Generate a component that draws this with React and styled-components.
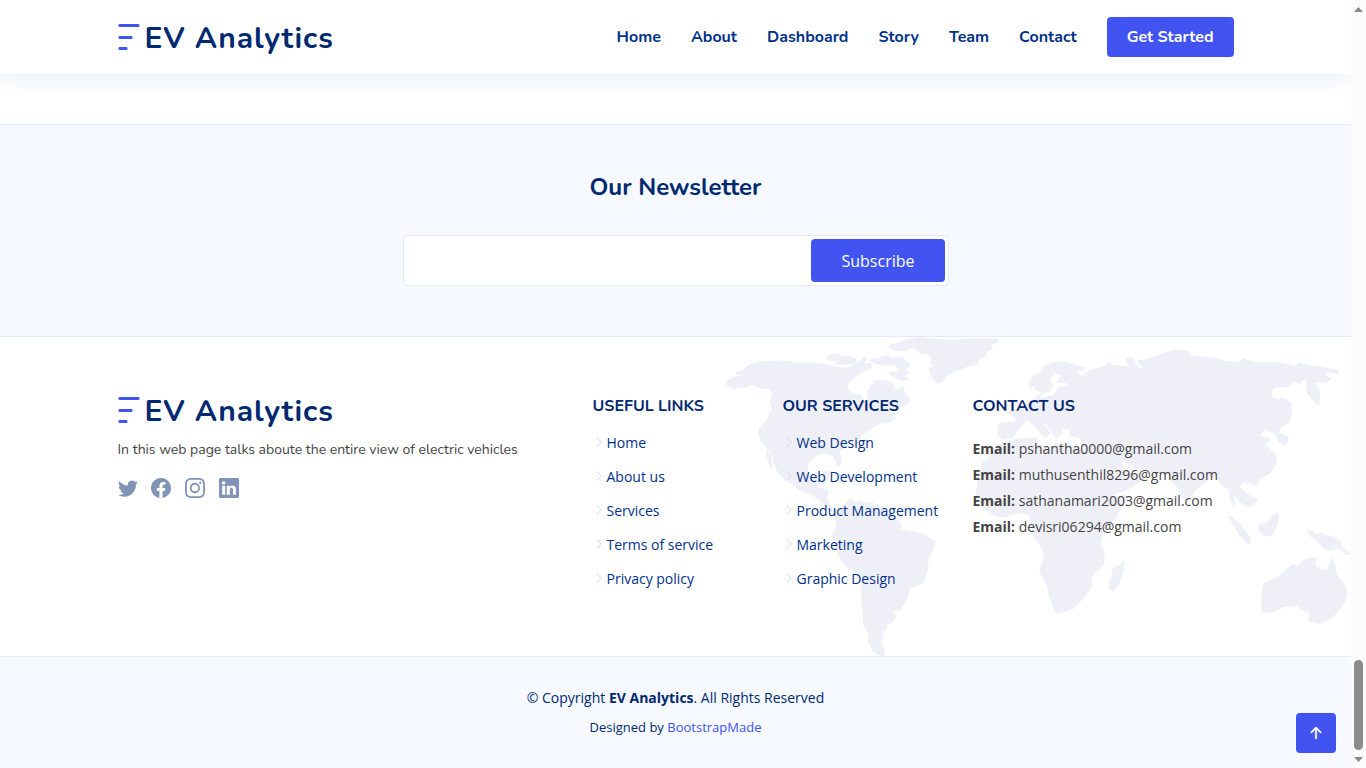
import React from "react";
import styled, { createGlobalStyle } from "styled-components";
import { BsTwitter, BsFacebook, BsInstagram, BsLinkedin, BsChevronRight, BsArrowUpShort } from "react-icons/bs";

const display = `Nunito, Lato, "Open Sans", sans-serif`;
const body = `"Open Sans", "Noto Sans", sans-serif`;

const GlobalStyle = createGlobalStyle`
  * { box-sizing: border-box; }
  body { margin: 0; font-family: ${body}; color: #444444; background: #fff; overflow: hidden; }
  h3, h4, p, ul { margin: 0; padding: 0; font-weight: inherit; }
  ul { list-style: none; }
  a { text-decoration: none; color: inherit; }
`;

const Shell = styled.div`
  display: flex;
  width: 1366px;
  height: 768px;
  overflow: hidden;
`;
const Page = styled.div`
  position: relative;
  width: 1351px;
  overflow: hidden;
`;
const Container = styled.div`
  width: 1140px;
  margin: 0 auto;
  padding: 0 12px;
`;

const Header = styled.header`
  position: relative;
  z-index: 2;
  height: 74px;
  background: #fff;
  box-shadow: 0 2px 20px rgba(1, 41, 112, 0.1);
`;
const HeaderRow = styled(Container)`
  display: flex;
  align-items: center;
  justify-content: space-between;
  height: 74px;
`;
const LogoLink = styled.a`
  display: flex;
  align-items: center;
  gap: 5px;
  height: 36px;
  svg { display: block; flex: none; }
`;
const LogoText = styled.span`
  padding-top: 4px;
  font: 700 30px/36px ${display};
  letter-spacing: 1px;
  color: #012970;
  white-space: nowrap;
`;
const Nav = styled.nav`
  display: flex;
  align-items: center;
  gap: 30px;
`;
const NavLink = styled.a`
  font: 700 16px/22px ${display};
  color: #013289;
  white-space: nowrap;
`;
const StartButton = styled.a`
  height: 40px;
  padding: 0 20px;
  border-radius: 4px;
  background: #4154f1;
  color: #fff;
  font: 700 16px/40px ${display};
  white-space: nowrap;
`;

const Newsletter = styled.section`
  height: 213px;
  margin-top: 50px;
  border-top: 1px solid #e1ecff;
  border-bottom: 1px solid #e1ecff;
  background: #f6f9ff;
  display: flex;
  flex-direction: column;
  align-items: center;
  padding-top: 48px;
`;
const NewsTitle = styled.h4`
  font: 700 24px/29px ${display};
  color: #012970;
`;
const Form = styled.form`
  display: flex;
  width: 546px;
  height: 51px;
  margin-top: 33px;
  padding: 3px;
  border: 1px solid #e1ecff;
  border-radius: 4px;
  background: #fff;
`;
const EmailInput = styled.input`
  flex: 1;
  min-width: 0;
  border: 0;
  outline: 0;
`;
const SubscribeButton = styled.button`
  width: 134px;
  height: 43px;
  padding: 1px 0 0 1px;
  border: 0;
  border-radius: 4px;
  background: #4154f1;
  color: #fff;
  font: 16px/24px ${body};
`;

const FooterTop = styled.section`
  position: relative;
  height: 319px;
  background: #fff;
`;
const WorldMap = styled.svg`
  position: absolute;
  top: 0;
  right: 0;
`;
const Columns = styled(Container)`
  position: relative;
  display: grid;
  grid-template-columns: 475px 190px 190px 261px;
  padding-top: 55px;
`;
const About = styled.p`
  margin-top: 11px;
  font: 400 14px/21px ${display};
  white-space: nowrap;
`;
const Social = styled.div`
  display: flex;
  gap: 13.7px;
  margin-top: 18px;
  color: rgba(1, 41, 112, 0.5);
  svg { display: block; width: 20px; height: 20px; }
`;
const ColumnTitle = styled.h4`
  padding-top: 5px;
  font: 700 16px/19px ${display};
  color: #012970;
  white-space: nowrap;
`;
const LinkList = styled.ul`
  margin-top: 9px;
`;
const LinkItem = styled.li`
  display: flex;
  align-items: center;
  height: 34px;
  font-size: 14px;
  color: #013289;
  white-space: nowrap;
  svg { width: 12px; height: 12px; margin-right: 2px; color: #d0d4fc; }
`;
const Contacts = styled.div`
  margin-top: 20px;
  font-size: 14px;
  line-height: 26px;
  white-space: nowrap;
`;

const FooterBottom = styled.section`
  height: 112px;
  padding-top: 30px;
  border-top: 1px solid #e1ecff;
  background: #f6f9ff;
  text-align: center;
  color: #012970;
`;
const Copyright = styled.p`
  font-size: 14px;
  line-height: 21px;
`;
const Credits = styled.p`
  margin-top: 9px;
  font-size: 13px;
  line-height: 20px;
  a { color: #4154f1; }
`;
const BackToTop = styled.a`
  position: absolute;
  right: 15px;
  bottom: 15px;
  display: flex;
  align-items: center;
  justify-content: center;
  width: 40px;
  height: 40px;
  border-radius: 4px;
  background: #4154f1;
  color: #fff;
  svg { stroke: #fff; stroke-width: 0.3px; }
`;

const Scrollbar = styled.div`
  display: flex;
  flex-direction: column;
  align-items: center;
  justify-content: space-between;
  width: 15px;
  padding: 7px 0 6px;
  background: #fcfcfc;
  svg { display: block; }
`;
const ThumbArea = styled.div`
  flex: 1;
  display: flex;
  align-items: flex-end;
  padding-bottom: 7px;
`;
const Thumb = styled.div`
  width: 9px;
  height: 90px;
  border-radius: 5px;
  background: #8b8b8b;
`;

const land = [
  // North and Central America
  "M22 155L35 143 60 140 75 135 50 133 48 126 72 121 85 106 110 97 160 93 205 94 225 101 270 98 310 103 330 108 375 115 395 110 405 98 425 90 432 82 438 86 432 103 450 98 458 108 446 119 420 130 395 147 381 165 385 182 400 190 425 197 434 217 446 207 440 190 450 175 452 166 465 165 460 157 475 150 500 153 520 162 521 178 530 184 548 170 556 194 572 210 560 225 530 230 505 245 496 258 530 248 524 260 500 265 480 280 450 298 425 315 410 340 380 349 356 364 364 385 362 400 355 408 344 390 342 376 310 370 290 375 264 398 260 430 275 448 296 442 306 427 330 423 322 448 296 462 292 474 323 480 320 510 335 538 350 540 345 550 325 536 310 520 290 502 262 490 235 478 222 465 196 450 175 430 163 400 158 380 148 362 125 336 116 310 118 295 140 270 158 235 151 215 158 190 150 177 110 172 95 163 82 171 55 171 35 180 40 170 22 168Z",
  "M140 362L150 372 158 414 149 408 142 382Z",
  // South America
  "M345 550L360 542 372 525 392 507 400 510 404 526 413 512 430 518 465 521 490 535 520 555 543 580 539 598 575 605 610 613 646 635 640 657 626 678 622 720 610 757 590 768 565 773 566 790 555 815 540 842 512 842 527 857 515 878 497 880 500 894 485 910 490 925 481 938 493 955 491 975 484 978 459 962 444 933 448 914 432 887 428 830 424 780 422 740 400 720 375 705 358 680 347 642 335 620 350 590Z",
  // Greenland
  "M508 47L535 39 562 29 598 22 640 28 700 31 760 26 832 27 835 36 810 44 816 57 795 68 794 79 778 90 768 103 740 110 700 126 680 136 671 151 657 160 641 150 632 132 628 113 644 111 632 98 637 85 622 72 602 69 588 58 600 53 570 55 551 63 520 60Z",
  // Arctic islands
  "M318 82L340 72 360 74 370 80 390 78 408 87 400 101 370 103 346 101 350 91 325 91Z",
  "M457 84L475 88 485 79 504 77 514 85 544 82 568 101 567 112 553 114 568 129 551 138 567 149 541 150 510 134 508 127 532 126 538 113 516 103 487 104 466 100 450 91Z",
  "M490 276L508 262 513 267 526 264 514 275 496 280Z",
  // Europe and Asia
  "M928 152L945 134 962 126 975 108 1005 97 1040 97 1096 115 1089 121 1065 122 1083 140 1115 120 1150 110 1168 97 1174 106 1230 110 1218 93 1225 82 1241 85 1245 101 1257 118 1270 113 1252 93 1280 88 1310 78 1335 68 1370 60 1407 65 1402 77 1440 80 1480 85 1520 95 1558 98 1568 84 1580 91 1610 98 1670 98 1730 110 1735 100 1780 108 1850 120 1854 131 1828 127 1810 130 1832 148 1814 157 1781 156 1799 182 1796 226 1771 201 1759 180 1762 150 1745 149 1742 160 1725 154 1700 170 1665 170 1653 182 1654 200 1665 207 1695 207 1711 219 1715 253 1705 279 1684 290 1675 306 1706 325 1695 345 1676 334 1666 312 1650 307 1640 294 1617 319 1650 325 1636 346 1664 370 1671 396 1650 430 1622 443 1612 464 1593 450 1576 451 1556 470 1587 496 1609 506 1611 514 1585 532 1561 516 1540 492 1545 530 1531 510 1530 478 1505 466 1492 443 1475 440 1425 480 1410 506 1388 504 1373 470 1354 453 1342 431 1290 423 1240 412 1198 385 1207 409 1230 431 1258 431 1270 446 1223 479 1173 495 1144 439 1096 365 1085 326 1050 317 1049 296 1026 295 1025 314 1008 325 985 290 956 264 991 308 974 322 945 288 921 266 895 296 878 321 850 327 834 315 835 285 849 276 885 279 888 265 860 247 890 239 917 220 943 207 967 188 948 179 943 164 928 172Z",
  // Africa
  "M835 345L872 331 924 325 950 324 955 344 990 354 1010 340 1065 350 1092 363 1120 409 1155 467 1175 502 1218 495 1215 513 1188 560 1150 605 1141 635 1152 672 1151 705 1122 730 1112 745 1116 767 1088 807 1057 837 1012 850 1004 843 989 800 982 765 959 725 972 682 966 652 937 610 938 580 925 553 890 549 848 561 820 555 792 532 768 494 774 460 770 432 790 397 821 370Z",
  "M1213 692L1212 715 1192 770 1180 783 1168 777 1168 755 1179 737 1176 718 1196 708Z",
  // Southeast Asia and Oceania
  "M1525 558L1538 563 1561 584 1592 625 1589 640 1582 639 1560 616Z",
  "M1671 548L1676 563 1667 595 1655 618 1631 616 1616 599 1618 586 1638 580 1660 555Z",
  "M1579 460L1588 441 1605 452 1611 466 1600 464 1590 456Z",
  "M1762 602L1779 602 1782 613 1803 610 1848 624 1862 637 1860 645 1893 673 1875 672 1854 653 1832 661 1812 655 1790 629 1774 621Z",
  "M1624 847L1629 770 1634 760 1680 738 1696 722 1720 702 1733 708 1758 686 1788 684 1785 706 1803 720 1824 722 1833 682 1846 712 1850 735 1875 765 1880 790 1870 825 1835 865 1798 881 1769 874 1767 840 1754 844 1730 826 1690 830 1655 847Z",
];
const seas = [
  "M990 150L1005 132 1025 135 1013 148 1014 159 1041 160 1041 166 1016 172 1001 195 960 205 967 190 989 184 999 168Z",
];

const LogoMark = () => (
  <svg width="22" height="26" viewBox="0 0 22 26" fill="#4154f1">
    <rect x="0.5" width="21" height="3" rx="1.2" />
    <rect x="0.5" y="12" width="14" height="3" rx="1.2" />
    <rect x="0.5" y="23" width="9" height="3" rx="1.2" />
  </svg>
);
const Logo = () => (
  <LogoLink href="#">
    <LogoMark />
    <LogoText>EV Analytics</LogoText>
  </LogoLink>
);
const Links = ({ items }) => (
  <LinkList>
    {items.map((t) => (
      <LinkItem key={t}><BsChevronRight /><a href="#">{t}</a></LinkItem>
    ))}
  </LinkList>
);

const navItems = ["Home", "About", "Dashboard", "Story", "Team", "Contact"];
const emails = ["pshantha0000", "muthusenthil8296", "sathanamari2003", "devisri06294"];

export default function App() {
  return (
    <Shell>
      <GlobalStyle />
      <Page>
        <Header>
          <HeaderRow>
            <Logo />
            <Nav>
              {navItems.map((t) => <NavLink key={t} href="#">{t}</NavLink>)}
              <StartButton href="#">Get Started</StartButton>
            </Nav>
          </HeaderRow>
        </Header>
        <Newsletter>
          <NewsTitle>Our Newsletter</NewsTitle>
          <Form>
            <EmailInput type="email" aria-label="Email" />
            <SubscribeButton type="button">Subscribe</SubscribeButton>
          </Form>
        </Newsletter>
        <FooterTop>
          <WorldMap width="631" height="319" viewBox="0 21 1893 957" aria-hidden="true">
            <path d={land.join("")} fill="#efeff7" stroke="#efeff7" strokeWidth="3" strokeLinejoin="round" />
            <path d={seas.join("")} fill="#fff" />
          </WorldMap>
          <Columns>
            <div>
              <Logo />
              <About>In this web page talks aboute the entire view of electric vehicles</About>
              <Social><BsTwitter /><BsFacebook /><BsInstagram /><BsLinkedin /></Social>
            </div>
            <div>
              <ColumnTitle>USEFUL LINKS</ColumnTitle>
              <Links items={["Home", "About us", "Services", "Terms of service", "Privacy policy"]} />
            </div>
            <div>
              <ColumnTitle>OUR SERVICES</ColumnTitle>
              <Links items={["Web Design", "Web Development", "Product Management", "Marketing", "Graphic Design"]} />
            </div>
            <div>
              <ColumnTitle>CONTACT US</ColumnTitle>
              <Contacts>
                {emails.map((e) => <p key={e}><strong>Email:</strong> {e}@gmail.com</p>)}
              </Contacts>
            </div>
          </Columns>
        </FooterTop>
        <FooterBottom>
          <Copyright>© Copyright <strong>EV Analytics</strong>. All Rights Reserved</Copyright>
          <Credits>Designed by <a href="#">BootstrapMade</a></Credits>
        </FooterBottom>
        <BackToTop href="#" aria-label="Back to top"><BsArrowUpShort size={24} /></BackToTop>
      </Page>
      <Scrollbar>
        <svg width="9" height="5" viewBox="0 0 9 5"><path d="M0 5L4.5 0 9 5Z" fill="#8b8b8b" /></svg>
        <ThumbArea><Thumb /></ThumbArea>
        <svg width="9" height="5" viewBox="0 0 9 5"><path d="M0 0L4.5 5 9 0Z" fill="#8b8b8b" /></svg>
      </Scrollbar>
    </Shell>
  );
}
